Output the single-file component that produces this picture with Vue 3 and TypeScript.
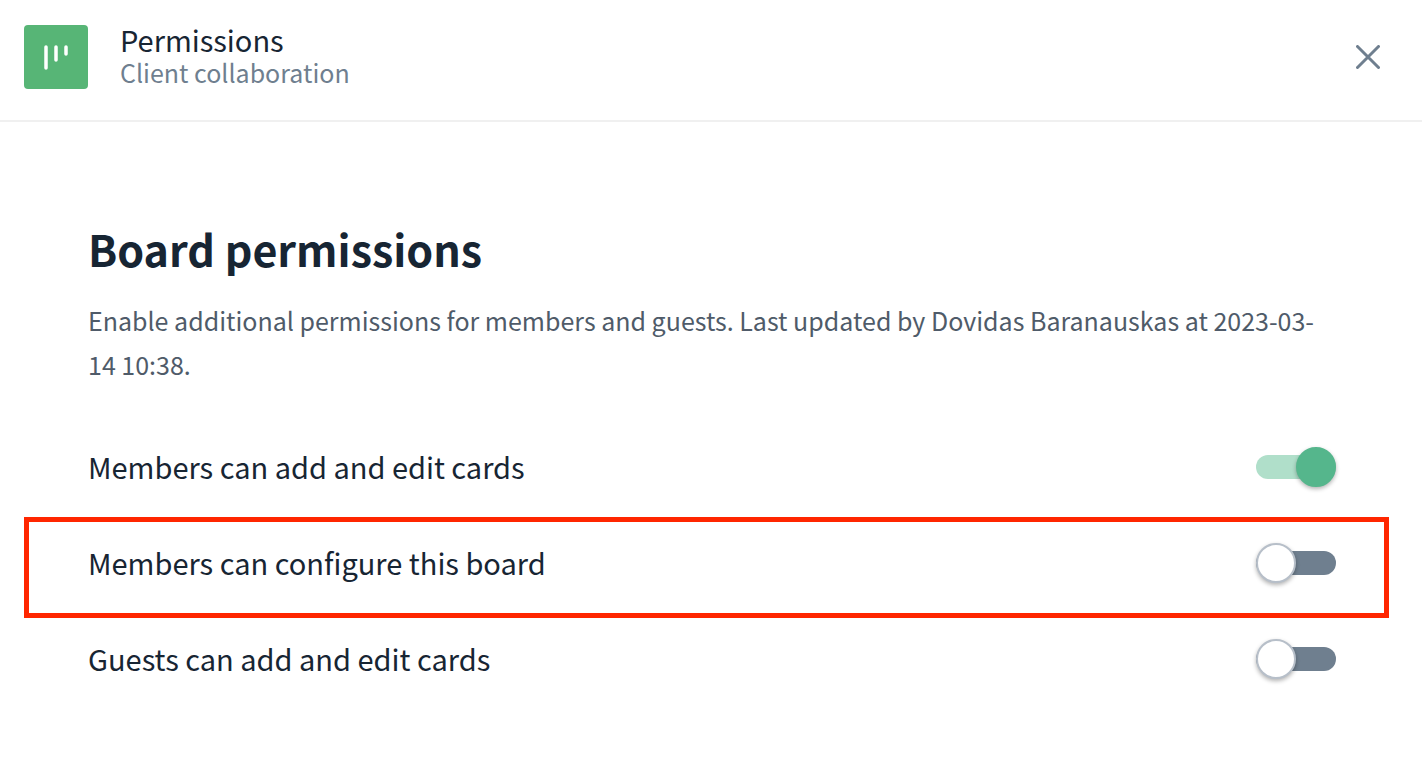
<script setup lang="ts">
import { ref } from 'vue'

interface Permission {
  id: string
  label: string
  enabled: boolean
  highlighted: boolean
}

const permissions = ref<Permission[]>([
  { id: 'members-cards', label: 'Members can add and edit cards', enabled: true, highlighted: false },
  { id: 'members-board', label: 'Members can configure this board', enabled: false, highlighted: true },
  { id: 'guests-cards', label: 'Guests can add and edit cards', enabled: false, highlighted: false },
])
</script>

<template>
  <div class="panel">
    <header class="header">
      <svg class="logo" viewBox="0 0 64 64" aria-hidden="true">
        <rect width="64" height="64" rx="4" fill="#57b576" />
        <path d="M22 22V43M32 22V35M42 22V29" stroke="#fff" stroke-width="3.500" stroke-linecap="round" />
      </svg>
      <div class="titles">
        <h1 class="title">Permissions</h1>
        <p class="subtitle">Client collaboration</p>
      </div>
      <button class="close" type="button" aria-label="Close">
        <svg viewBox="0 0 24 24" aria-hidden="true">
          <path d="M1.500 1.500L22.500 22.500M22.500 1.500L1.500 22.500" stroke="#6f7f8f" stroke-width="3" stroke-linecap="round" />
        </svg>
      </button>
    </header>
    <main class="content">
      <h2 class="heading">Board permissions</h2>
      <p class="description">
        Enable additional permissions for members and guests. Last updated by Dovidas Baranauskas at 2023-03-14 10:38.
      </p>
      <ul class="list">
        <li v-for="item in permissions" :key="item.id" class="row" :class="{ highlighted: item.highlighted }">
          <label class="label" :for="item.id">{{ item.label }}</label>
          <input :id="item.id" v-model="item.enabled" class="switch" type="checkbox" role="switch" />
        </li>
      </ul>
    </main>
  </div>
</template>

<style>
body {
  background: #fff;
}
</style>

<style scoped>
.panel {
  font-family: "Noto Sans CJK SC", "Noto Sans", sans-serif;
  color: #172533;
}
.header {
  display: flex;
  align-items: flex-start;
  gap: 32px;
  padding: 25px 22px 29px 24px;
  border-bottom: 2px solid #f0f0f0;
}
.logo {
  width: 64px;
  height: 64px;
  flex: none;
}
.titles {
  flex: 1;
}
.title,
.subtitle {
  margin: 0;
  font-weight: 400;
}
.title {
  font-size: 29px;
  line-height: 28px;
}
.subtitle {
  font-size: 25px;
  line-height: 38px;
  color: #6f7f8f;
}
.close {
  width: 64px;
  height: 64px;
  padding: 0;
  border: 0;
  background: none;
  display: grid;
  place-items: center;
  cursor: pointer;
}
.close svg {
  width: 24px;
  height: 24px;
}
.content {
  padding: 94px 24px 64px;
}
.heading {
  margin: 0 64px 18px;
  font-size: 43px;
  line-height: 64px;
  font-weight: 700;
}
.description {
  margin: 0 64px 33px;
  font-size: 25px;
  line-height: 44px;
  color: #4f5b69;
}
.list {
  margin: 0;
  padding: 0;
  list-style: none;
}
.row {
  position: relative;
  display: flex;
  align-items: center;
  justify-content: space-between;
  height: 96px;
  padding: 0 62px 0 64px;
}
.highlighted::after {
  content: "";
  position: absolute;
  inset: 2px 9px -7px 0;
  border: 5px solid #ff2600;
  pointer-events: none;
}
.label {
  padding-bottom: 2px;
  font-size: 29px;
  line-height: 48px;
}
.switch {
  appearance: none;
  position: relative;
  flex: none;
  width: 80px;
  height: 24px;
  margin: 0;
  border-radius: 12px;
  background: #6f7f8f;
  cursor: pointer;
}
.switch::before {
  content: "";
  position: absolute;
  top: -8px;
  left: 0;
  box-sizing: border-box;
  width: 40px;
  height: 40px;
  border: 2px solid #b7bfc9;
  border-radius: 50%;
  background: #fff;
  box-shadow: 0 2px 4px rgba(0, 0, 0, 0.3);
}
.switch:checked {
  background: #b0dfca;
}
.switch:checked::before {
  left: 40px;
  border-color: #55b68c;
  background: #55b68c;
}
</style>
